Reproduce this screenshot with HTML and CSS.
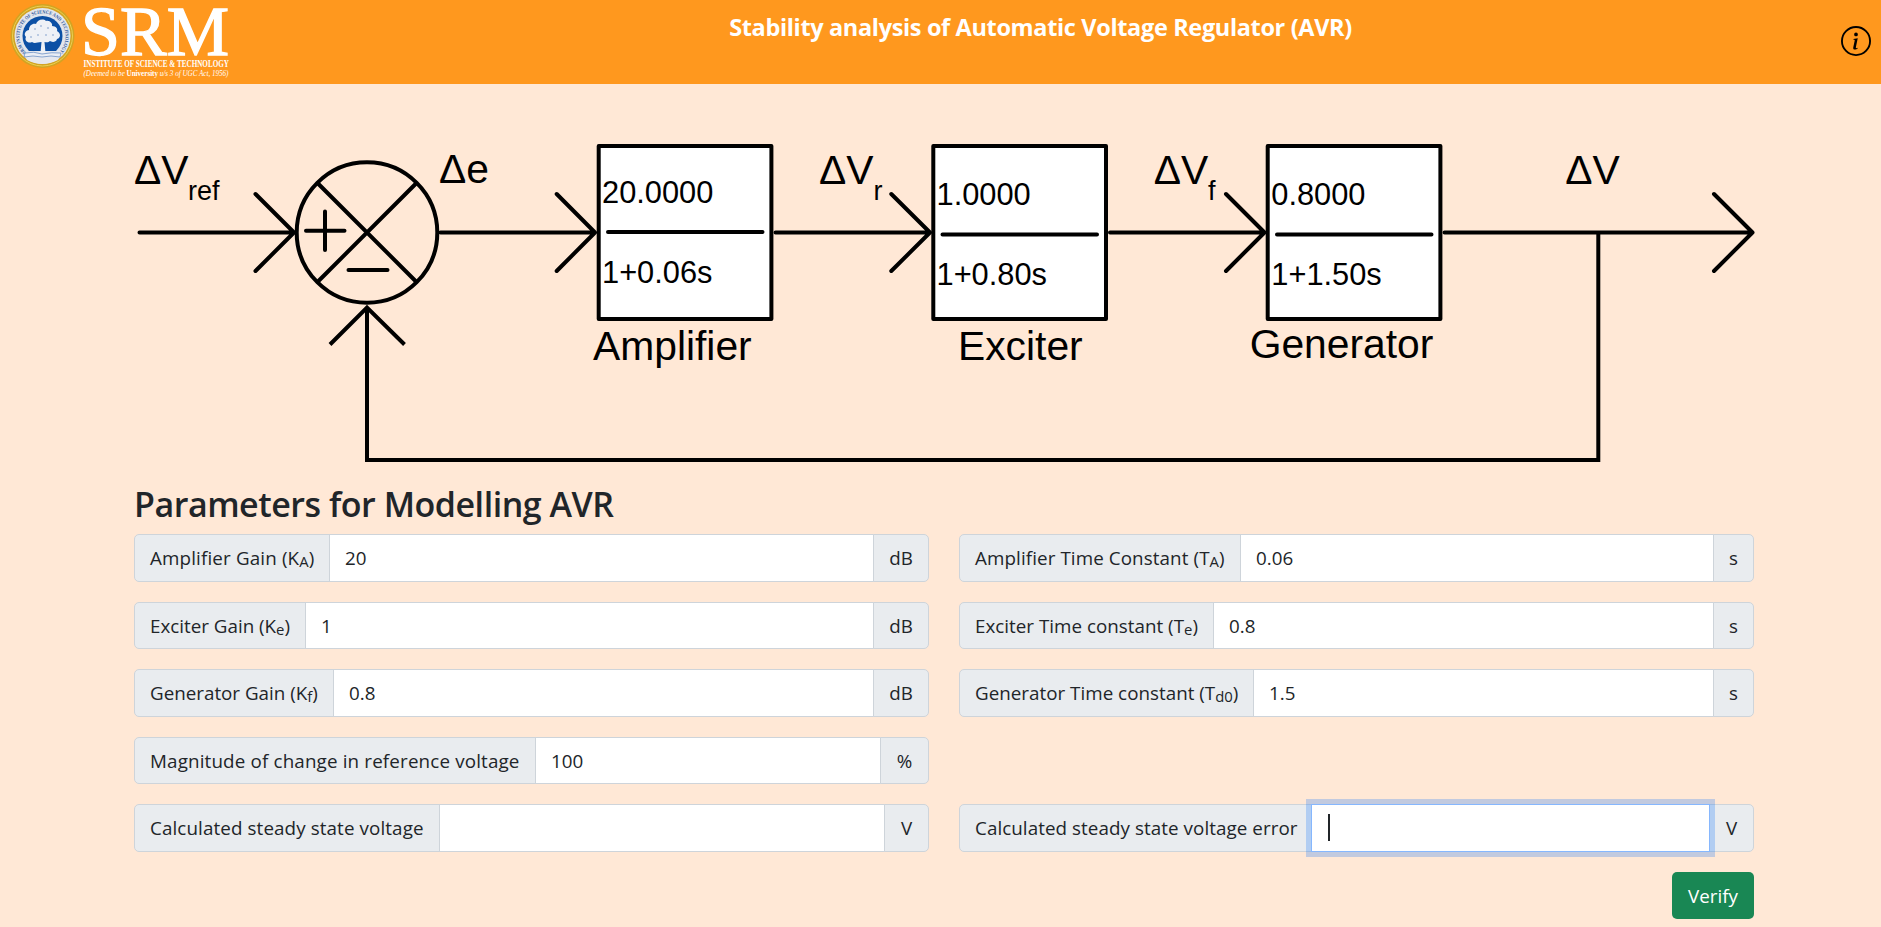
FILE: index.html
```html
<!DOCTYPE html>
<html lang="en">
<head>
<meta charset="utf-8">
<title>Stability analysis of Automatic Voltage Regulator (AVR)</title>
<link rel="stylesheet" href="styles.css">
</head>
<body>
<header class="topbar">
  <svg class="logo" viewBox="0 0 240 84" width="240" height="84">
    <circle cx="42.5" cy="36" r="32" fill="#d3a322"/>
    <circle cx="42.5" cy="36" r="30" fill="none" stroke="#ead052" stroke-width="1"/>
    <circle cx="42.5" cy="36" r="28" fill="#e2e5ec"/>
    <circle cx="42.5" cy="36" r="20" fill="#0c50a5"/>
    <path d="M23 51 L62 51 L58 60 Q42 68 27 60Z" fill="#e6e8ee"/>
    <path d="M40.5 53 L41.5 42 C37 42 35 44 32 42 C28 44 24 40 26 37 C23 34 26 30 29 30 C29 25 33 23 36 24 C37 20 43 18 46 21 C50 20 53 24 52 26 C56 26 58 29 57 31 C61 33 61 38 57 39 C56 43 51 42 50 41 C48 43 46 42 44.500 42 L45.500 53Z" fill="#eef1f6"/>
    <g fill="#a9bddb"><circle cx="35" cy="29" r="1"/><circle cx="41" cy="26" r="1"/><circle cx="48" cy="28" r="1.100"/><circle cx="38" cy="35" r="1"/><circle cx="46" cy="35" r="1"/><circle cx="53" cy="35" r="1"/><circle cx="31" cy="37" r="1"/></g>
    <path d="M24 57 L25 53 Q34 51 42 54 Q52 52 61 53 L60 57 Q51 55 42 57 Q33 55 24 57Z" fill="#e9edf5" stroke="#5f86c0" stroke-width=".7"/>
    <path id="ring" d="M26 52.500 A23 23 0 1 1 59 52.500" fill="none"/>
    <text class="seal-text"><textPath href="#ring" textLength="106" lengthAdjust="spacingAndGlyphs">SRM INSTITUTE OF SCIENCE AND TECHNOLOGY</textPath></text>
    <text class="logo-name" x="81" y="55" textLength="148" lengthAdjust="spacingAndGlyphs">SRM</text>
    <text class="logo-sub" x="83.500" y="67" textLength="145.500" lengthAdjust="spacingAndGlyphs">INSTITUTE OF SCIENCE &amp; TECHNOLOGY</text>
    <text class="logo-note" x="83.500" y="76" textLength="145" lengthAdjust="spacingAndGlyphs">(Deemed to be <tspan class="logo-strong">University</tspan> u/s 3 of UGC Act, 1956)</text>
  </svg>
  <h1 class="title">Stability analysis of Automatic Voltage Regulator (AVR)</h1>
  <svg class="info" viewBox="0 0 16 16" width="30" height="30">
    <path d="M8 15A7 7 0 1 1 8 1a7 7 0 0 1 0 14zm0 1A8 8 0 1 0 8 0a8 8 0 0 0 0 16z"/>
    <path d="m8.930 6.588-2.290.287-.082.380.450.083c.294.070.352.176.288.469l-.738 3.468c-.194.897.105 1.319.808 1.319.545 0 1.178-.252 1.465-.598l.088-.416c-.2.176-.492.246-.686.246-.275 0-.375-.193-.304-.533L8.930 6.588zM9 4.500a1 1 0 1 1-2 0 1 1 0 0 1 2 0z"/>
  </svg>
</header>
<main class="content">
  <svg class="diagram" viewBox="134 84 1620 386" width="1620" height="386">
    <g class="wires">
      <path d="M139.500 232.500H294M255.500 194L294 232.500L255.500 271"/>
      <circle cx="367" cy="232.500" r="70.300"/>
      <path d="M318 183.500L416 281.500M416 183.500L318 281.500"/>
      <path d="M306 230.700H344.500M325 211.500V250M348.500 270H387.500"/>
      <path d="M440.500 232.500H595M556.700 194L595 232.500L556.700 271"/>
      <path d="M775.500 232.500H930M891.300 194L930 232.500L891.300 271"/>
      <path d="M1110 232.500H1264.500M1226 194L1264.500 232.500L1226 271"/>
      <path d="M1444.500 232.500H1752.500M1714 194L1752.500 232.500L1714 271"/>
      <path class="feedback" d="M1598.300 232.500V460H367V307M330 344.500L367 307.500L404.500 344.500"/>
      <rect x="598.700" y="146" width="172.700" height="173"/>
      <rect x="933.300" y="146" width="172.700" height="173"/>
      <rect x="1267.700" y="146" width="172.700" height="173"/>
      <path d="M608 232H762.500M942.500 234.500H1097M1277 234.500H1431.500"/>
    </g>
    <g class="signal">
      <text x="134" y="184.300">ΔV</text><text class="sub" x="188" y="199.700">ref</text>
      <text x="439" y="183.300">Δe</text>
      <text x="819" y="184.300">ΔV</text><text class="sub" x="873.500" y="199.700">r</text>
      <text x="1153.700" y="184.300">ΔV</text><text class="sub" x="1208" y="199.700">f</text>
      <text x="1565.300" y="184.300">ΔV</text>
      <text x="593" y="359.700">Amplifier</text>
      <text x="958" y="359.700">Exciter</text>
      <text x="1249.700" y="358.400">Generator</text>
    </g>
    <g class="transfer">
      <text x="602" y="202.700">20.0000</text><text x="602" y="283">1+0.06s</text>
      <text x="936.500" y="204.700">1.0000</text><text x="936.500" y="285">1+0.80s</text>
      <text x="1271.300" y="204.700">0.8000</text><text x="1271.300" y="285">1+1.50s</text>
    </g>
  </svg>
  <h2 class="heading">Parameters for Modelling AVR</h2>
  <form class="params">
    <div class="group"><label class="tag w-ka"><span>Amplifier Gain (K<sub>A</sub>)</span></label><input class="field" value="20"><span class="tag unit-db">dB</span></div>
    <div class="group"><label class="tag w-ta"><span>Amplifier Time Constant (T<sub>A</sub>)</span></label><input class="field" value="0.06"><span class="tag unit-s">s</span></div>
    <div class="group"><label class="tag w-ke"><span>Exciter Gain (K<sub>e</sub>)</span></label><input class="field" value="1"><span class="tag unit-db">dB</span></div>
    <div class="group"><label class="tag w-te"><span>Exciter Time constant (T<sub>e</sub>)</span></label><input class="field" value="0.8"><span class="tag unit-s">s</span></div>
    <div class="group"><label class="tag w-kf"><span>Generator Gain (K<sub>f</sub>)</span></label><input class="field" value="0.8"><span class="tag unit-db">dB</span></div>
    <div class="group"><label class="tag w-td"><span>Generator Time constant (T<sub>d0</sub>)</span></label><input class="field" value="1.5"><span class="tag unit-s">s</span></div>
    <div class="group"><label class="tag w-mag"><span>Magnitude of change in reference voltage</span></label><input class="field" value="100"><span class="tag unit-pc">%</span></div>
    <div></div>
    <div class="group"><label class="tag w-ssv"><span>Calculated steady state voltage</span></label><input class="field"><span class="tag unit-v">V</span></div>
    <div class="group"><label class="tag w-sse"><span>Calculated steady state voltage error</span></label><div class="field active"><i class="caret"></i></div><span class="tag unit-v">V</span></div>
  </form>
  <div class="actions"><button class="verify" type="button">Verify</button></div>
</main>
</body>
</html>
```
FILE: styles.css
```css
* { box-sizing: border-box; }
html { background: #fff; }
body {
  margin: 0;
  height: 926.500px;
  overflow: hidden;
  background: #ffe8d6;
  color: #212529;
  font-family: "Open Sans", "Noto Sans", sans-serif;
  font-size: 18.800px;
}
.topbar {
  height: 84px;
  display: flex;
  align-items: flex-start;
  background: #ff981e;
}
.logo { display: block; flex: none; overflow: visible; }
.seal-text { font: bold 5px "Liberation Serif", serif; fill: #31599c; }
.logo-name { font: 69px "Liberation Serif", serif; fill: #fff; stroke: #fff; stroke-width: 1.300; }
.logo-sub { font: bold 9.500px "Liberation Serif", serif; fill: #fff; }
.logo-note { font: italic 8px "Liberation Serif", serif; fill: #fff; }
.logo-strong { font-style: normal; font-weight: bold; }
.title {
  flex: 1;
  margin: 10px 0 0;
  text-align: center;
  color: #fff;
  font-size: 23.500px;
  font-weight: 700;
  letter-spacing: -.350px;
  line-height: 34px;
  white-space: nowrap;
}
.info { flex: none; margin: 26px 10px 0 0; fill: #000; }
.content { width: 1620px; margin: 0 auto 0 134px; }
.diagram { display: block; overflow: visible; font-family: "Liberation Sans", Arial, sans-serif; }
.wires { fill: none; stroke: #000; stroke-width: 4; stroke-linecap: round; stroke-linejoin: round; }
.wires rect { fill: #fff; }
.wires .feedback { stroke-linejoin: miter; stroke-linecap: butt; }
.signal { font-size: 40.800px; }
.signal .sub { font-size: 27px; }
.transfer { font-size: 30.800px; }
.heading {
  margin: 13px 0 9px;
  font-size: 34px;
  font-weight: 600;
  letter-spacing: -.470px;
  line-height: 42px;
  white-space: nowrap;
}
.params {
  display: grid;
  grid-template-columns: 795px 795px;
  column-gap: 30px;
  row-gap: 20px;
}
.group { display: flex; height: 47.500px; }
.tag {
  flex: none;
  display: flex;
  align-items: center;
  justify-content: center;
  padding-top: 1px;
  background: #e9ecef;
  border: 1px solid #ced4da;
  white-space: nowrap;
}
.tag:first-child { border-radius: 5px 0 0 5px; justify-content: flex-start; padding-left: 15px; }
.tag:last-child { border-radius: 0 5px 5px 0; }
.tag sub { font-size: .79em; line-height: 0; position: relative; bottom: -.12em; vertical-align: baseline; }
.field {
  flex: 1;
  min-width: 0;
  margin: 0 -1px;
  padding: 1px 15px 0;
  background: #fff;
  border: 1px solid #ced4da;
  border-radius: 0;
  color: #212529;
  font: inherit;
  outline: none;
}
.active {
  z-index: 1;
  display: flex;
  align-items: center;
  padding: 0 16px;
  border-color: #86b7fe;
  box-shadow: 0 0 0 5px rgba(13, 110, 253, .25);
}
.caret { width: 2px; height: 27px; background: #212529; }
.w-ka { width: 196px; letter-spacing: .150px; }
.w-ta { width: 282px; letter-spacing: .100px; }
.w-ke { width: 172px; }
.w-te { width: 255px; letter-spacing: .020px; }
.w-kf { width: 200px; }
.w-td { width: 295px; letter-spacing: .020px; }
.w-mag { width: 402px; letter-spacing: .160px; }
.w-ssv { width: 306px; letter-spacing: .110px; }
.w-sse { width: 353px; letter-spacing: .070px; }
.unit-db { width: 56px; }
.unit-s { width: 41px; }
.unit-pc { width: 49px; }
.unit-v { width: 45px; }
.actions { display: flex; justify-content: flex-end; margin-top: 20px; }
.verify {
  width: 82px;
  height: 47px;
  padding: 1px 0 0;
  border: 0;
  border-radius: 5px;
  background: #198754;
  color: #fff;
  font: inherit;
}
```
